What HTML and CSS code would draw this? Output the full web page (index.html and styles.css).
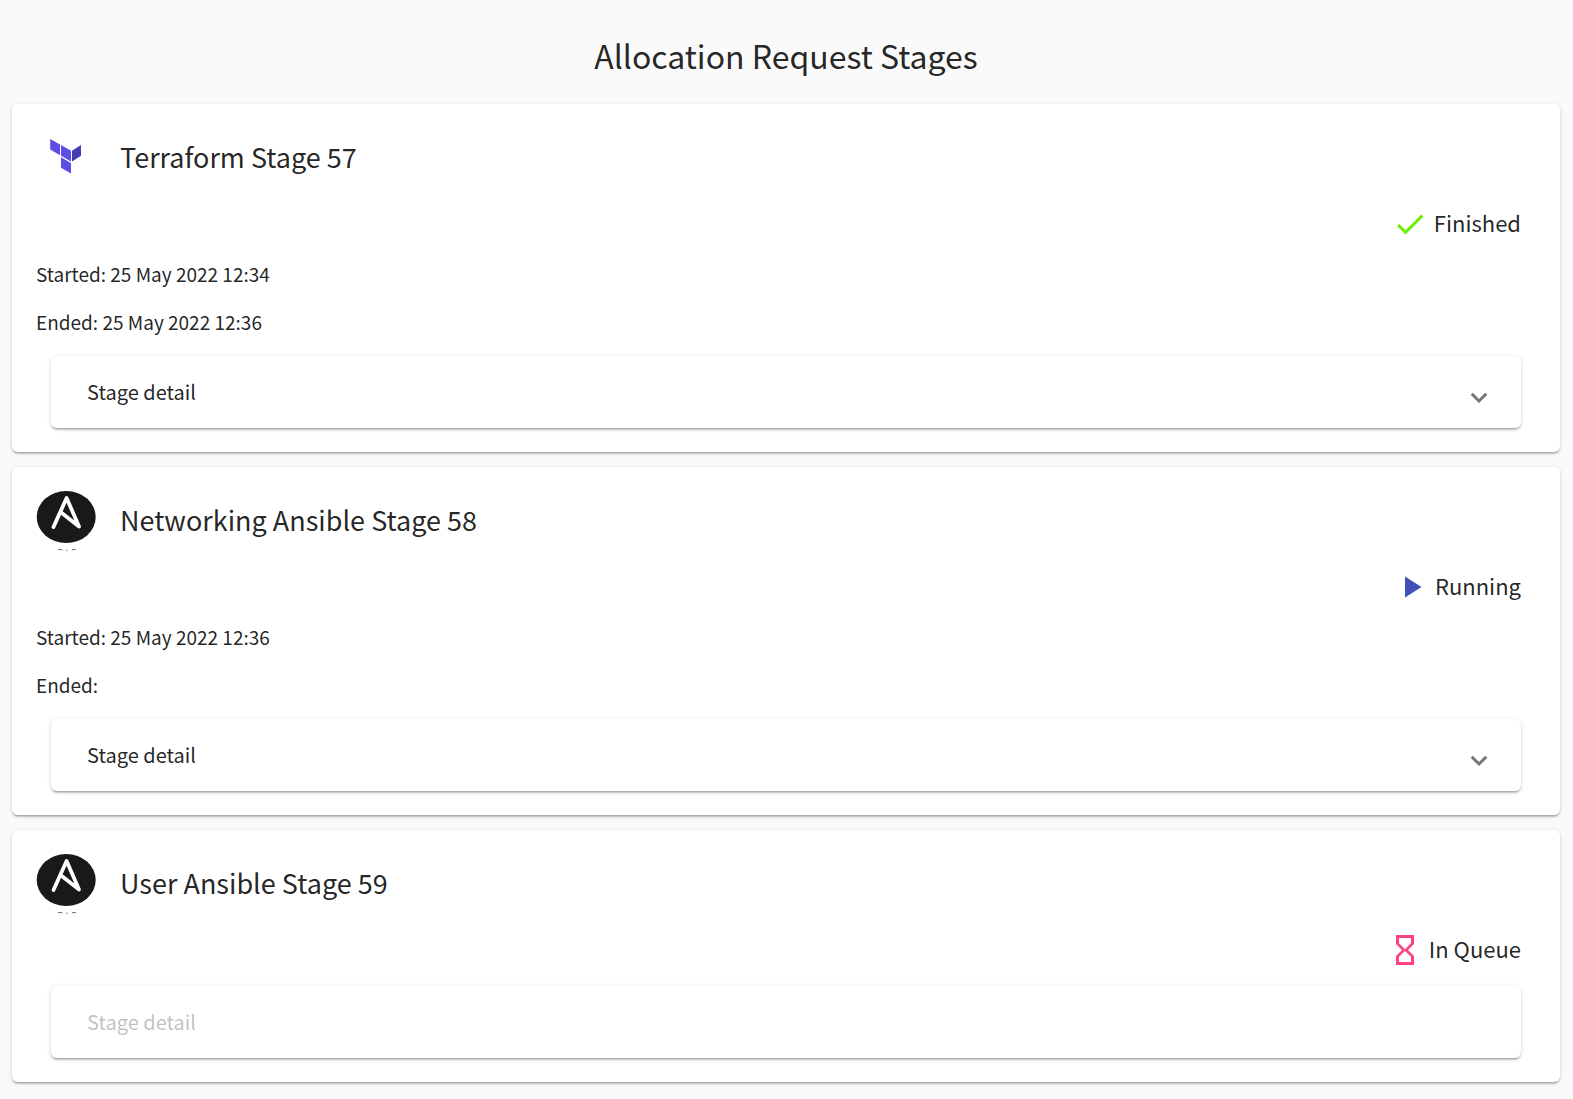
FILE: index.html
```html
<!DOCTYPE html>
<html lang="en">
<head>
<meta charset="utf-8">
<title>Allocation Request Stages</title>
<link rel="stylesheet" href="styles.css">
</head>
<body>
<svg class="defs" aria-hidden="true">
  <symbol id="ansible" viewBox="0 0 60 60">
    <ellipse cx="30.200" cy="26" rx="29.500" ry="26" fill="#1a1918"/>
    <path d="M17.500 36 30.600 7 43 35.500 24.800 21.200" fill="none" stroke="#fff" stroke-width="3.800" stroke-linecap="round" stroke-linejoin="round"/>
    <path d="M22 58.500h4v1M30 59.300h1.500M36.500 59.500v-1h3.500" fill="none" stroke="#777" stroke-width="1"/>
  </symbol>
</svg>
<main class="page">
  <h1 class="page-title">Allocation Request Stages</h1>

  <section class="card">
    <header class="card-header">
      <svg class="logo" viewBox="0 0 60 60" aria-hidden="true">
        <path d="M14.200 11 24 16.500V27.200L14.200 21.500zM25 17 35 22.700V33.400L25 27.700zM25 29.200 35 34.900V45.500L25 39.800z" fill="#5c4ee5"/>
        <path d="M36 22.700 45 17V27.700L36 33.400z" fill="#4040b2"/>
      </svg>
      <h2 class="card-title">Terraform Stage 57</h2>
    </header>
    <div class="status">
      <svg class="status-icon" viewBox="0 0 24 24" aria-hidden="true"><path d="M9 16.170 4.830 12l-1.420 1.410L9 19 21 7l-1.410-1.410z" fill="#6bef00"/></svg>
      <span>Finished</span>
    </div>
    <p class="time">Started: 25 May 2022 12:34</p>
    <p class="time">Ended: 25 May 2022 12:36</p>
    <button class="panel" type="button" aria-expanded="false">Stage detail
      <svg class="chevron" viewBox="0 0 18 12" aria-hidden="true"><path d="M1.700 1.700l7.300 7.300 7.300-7.300" fill="none" stroke="#757575" stroke-width="3"/></svg>
    </button>
  </section>

  <section class="card">
    <header class="card-header">
      <svg class="logo" aria-hidden="true"><use href="#ansible"/></svg>
      <h2 class="card-title">Networking Ansible Stage 58</h2>
    </header>
    <div class="status">
      <svg class="status-icon" viewBox="0 0 24 24" aria-hidden="true"><path d="M8 5v14l11-7z" fill="#3f51b5"/></svg>
      <span>Running</span>
    </div>
    <p class="time">Started: 25 May 2022 12:36</p>
    <p class="time">Ended:</p>
    <button class="panel" type="button" aria-expanded="false">Stage detail
      <svg class="chevron" viewBox="0 0 18 12" aria-hidden="true"><path d="M1.700 1.700l7.300 7.300 7.300-7.300" fill="none" stroke="#757575" stroke-width="3"/></svg>
    </button>
  </section>

  <section class="card">
    <header class="card-header">
      <svg class="logo" aria-hidden="true"><use href="#ansible"/></svg>
      <h2 class="card-title">User Ansible Stage 59</h2>
    </header>
    <div class="status">
      <svg class="status-icon" viewBox="0 0 24 24" aria-hidden="true"><path d="M6 2v6l4 4-4 4v6h12v-6l-4-4 4-4V2H6zm10 14.500V20H8v-3.500l4-4 4 4zm-4-5-4-4V4h8v3.500l-4 4z" fill="#ff4081"/></svg>
      <span>In Queue</span>
    </div>
    <button class="panel" type="button" disabled>Stage detail</button>
  </section>
</main>
</body>
</html>
```
FILE: styles.css
```css
* {
  box-sizing: border-box;
}

body {
  margin: 0;
  background: #fafafa;
  color: rgba(0, 0, 0, 0.87);
  font-family: "Noto Sans CJK SC", "Noto Sans CJK JP", sans-serif;
}

.defs {
  display: none;
}

.page {
  display: flex;
  flex-direction: column;
  gap: 15px;
  padding: 31px 13px 17px 12px;
}

.page-title {
  margin: 0 0 10px;
  font-size: 32px;
  line-height: 48px;
  font-weight: 400;
  text-align: center;
}

.card {
  display: flex;
  flex-direction: column;
  gap: 18px;
  padding: 24px;
  border-radius: 6px;
  background: #fff;
}

.card,
.panel {
  box-shadow: 0 3px 2px -2px rgba(0, 0, 0, 0.2),
    0 2px 2px 0 rgba(0, 0, 0, 0.14),
    0 1px 5px 0 rgba(0, 0, 0, 0.12);
}

.card-header {
  display: flex;
  gap: 24px;
}

.logo {
  width: 60px;
  height: 60px;
}

.card-title {
  margin: 0;
  font-size: 27px;
  line-height: 58px;
  font-weight: 400;
}

.status {
  display: flex;
  justify-content: flex-end;
  gap: 6px;
  margin-right: 15px;
  font-size: 22px;
  line-height: 32px;
}

.status-icon {
  width: 36px;
  height: 36px;
}

.time {
  margin: 0;
  padding-bottom: 2px;
  font-size: 19px;
  line-height: 28px;
}

.panel {
  display: flex;
  justify-content: space-between;
  align-items: center;
  min-height: 72px;
  margin: 0 15px;
  padding: 0 33px 2px 36px;
  border: 0;
  border-radius: 6px;
  background: #fff;
  color: inherit;
  font: inherit;
  font-size: 20px;
  text-align: left;
  cursor: pointer;
}

.panel:disabled {
  color: rgba(0, 0, 0, 0.26);
  cursor: default;
}

.chevron {
  width: 18px;
  height: 12px;
  margin-top: 14px;
}
```
